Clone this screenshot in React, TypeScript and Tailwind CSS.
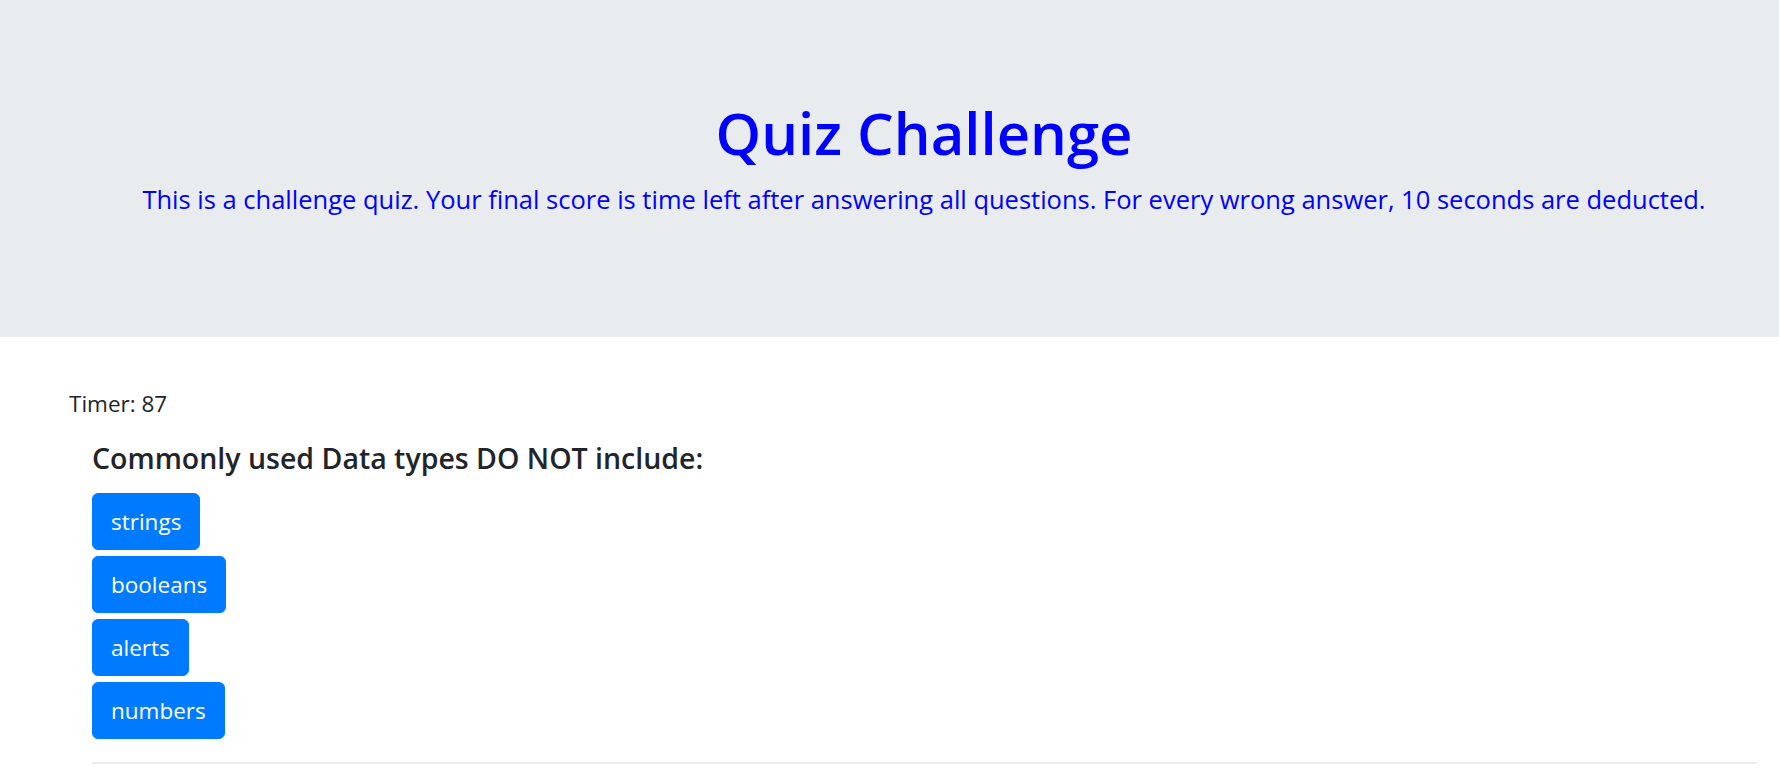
export default function App() {
  const choices = ["strings", "booleans", "alerts", "numbers"]

  return (
    <div className="min-h-screen bg-white font-['Open_Sans',sans-serif] text-[#212529]">
      {/* Header */}
      <header className="h-[337px] bg-[#e9ecef] pl-[69px] pt-[98px] text-center text-[#0000ff]">
        <h1 className="text-[58px] font-semibold leading-[70px]">Quiz Challenge</h1>
        <p className="mt-[10px] text-[25.5px] font-normal leading-[42px]">
          This is a challenge quiz. Your final score is time left after answering all questions. For every wrong answer, 10 seconds are deducted.
        </p>
      </header>

      {/* Quiz */}
      <main className="pl-[69px] pr-[22px] pt-[49px]">
        <p className="text-[22.5px] leading-[36px]">Timer: 87</p>
        <div className="pl-[23px]">
          <h5 className="mt-[18px] mb-[17px] text-[28.5px] font-semibold leading-[36px]">
            Commonly used Data types DO NOT include:
          </h5>
          <div className="flex flex-col items-start gap-[6px]">
            {choices.map((choice) => (
              <button
                key={choice}
                className="h-[57px] rounded-[6px] border border-[#007bff] bg-[#007bff] px-[18px] text-[22.5px] leading-[36px] text-white"
              >
                {choice}
              </button>
            ))}
          </div>
          <hr className="mt-[23px] border-t-2 border-[#ebebeb]" />
        </div>
      </main>
    </div>
  )
}
